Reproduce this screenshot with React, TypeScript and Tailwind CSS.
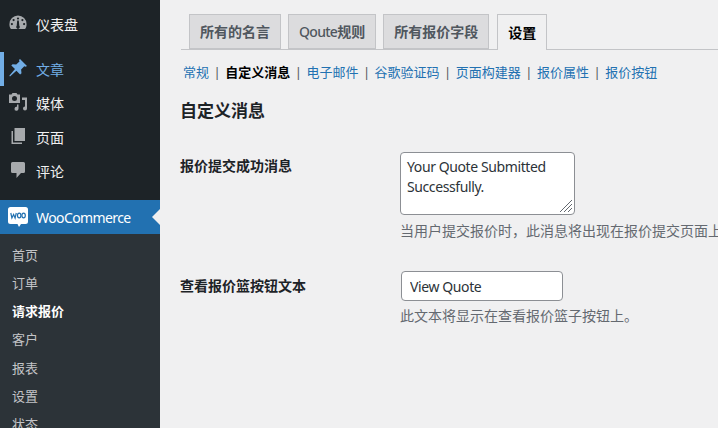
const font = { fontFamily: '"Noto Sans","Noto Sans CJK SC",sans-serif' };

function Gauge() {
  return (
    <svg viewBox="0 0 20 20" className="w-5 h-5" fill="#a7aaad">
      <path fillRule="evenodd" d="M10 2.600a8.600 8.600 0 0 0-8.600 8.600c0 1.900.6 3.500 1.500 4.900h14.200c.9-1.400 1.500-3 1.500-4.900A8.600 8.600 0 0 0 10 2.600zM10 4.400a1.100 1.100 0 1 1 0 2.200 1.100 1.100 0 0 1 0-2.200zM5.600 6a1.100 1.100 0 1 1 0 2.200A1.100 1.100 0 0 1 5.600 6zm8.800 0a1.100 1.100 0 1 1 0 2.200 1.100 1.100 0 0 1 0-2.200zM3.900 10a1.100 1.100 0 1 1 0 2.200 1.100 1.100 0 0 1 0-2.200zm12.200 0a1.100 1.100 0 1 1 0 2.200 1.100 1.100 0 0 1 0-2.200zM10.800 7.400l.5 5.400a1.800 1.800 0 1 1-2.600 0l.5-5.400z" />
    </svg>
  );
}
function Pin() {
  return (
    <svg viewBox="0 0 20 20" className="w-5 h-5" fill="#72aee6">
      <path d="M12 1l7 7-1.400.8-1.300-.5-3.200 3.300.4 3.600-1.400 1.300-3.700-3.700L2 18.500l-.7-.7 5.700-6.700L3.300 7.600l1.300-1.400 3.600.4 3.300-3.200-.5-1.300z" />
    </svg>
  );
}
function Media() {
  return (
    <svg viewBox="0 0 20 20" className="w-5 h-5" fill="#a7aaad">
      <path fillRule="evenodd" d="M1 2.500h2.500l1-1.500h4l1 1.500H12v8.500H1zM6.500 4a2.500 2.500 0 1 0 0 5 2.500 2.500 0 0 0 0-5z" />
      <path d="M14 5.500h5V16.500a2 2 0 1 1-2-2V8h-3z" />
      <path d="M10.500 12.500v4.300a2 2 0 1 1-1.500-2v-2.300z" />
    </svg>
  );
}
function Page() {
  return (
    <svg viewBox="0 0 20 20" className="w-5 h-5" fill="#a7aaad">
      <path d="M6.500 2H17v13H6.500z" />
      <path d="M3.500 5H5v11.500h9V18H3.500z" />
    </svg>
  );
}
function Comment() {
  return (
    <svg viewBox="0 0 20 20" className="w-5 h-5" fill="#a7aaad">
      <path d="M4.500 2h11A1.500 1.500 0 0 1 17 3.500v8a1.500 1.500 0 0 1-1.500 1.500H13l-4.500 5v-5h-4A1.500 1.500 0 0 1 3 11.500v-8A1.500 1.500 0 0 1 4.500 2z" />
    </svg>
  );
}
function Woo() {
  return (
    <svg viewBox="0 0 20 20" className="w-5 h-5">
      <path fill="#fff" d="M2.500 0h15A2.500 2.500 0 0 1 20 2.500v12a2.500 2.500 0 0 1-2.500 2.500H13l-2 3-1.500-3h-7A2.500 2.500 0 0 1 0 14.500v-12A2.500 2.500 0 0 1 2.500 0z" />
      <path fill="none" stroke="#2271b1" strokeWidth="1.200" d="M2.800 6l1.100 5 1.700-3.600 1.500 3.600L8.300 6" />
      <ellipse cx="11.200" cy="8.500" rx="1.700" ry="2.300" fill="none" stroke="#2271b1" strokeWidth="1.200" />
      <ellipse cx="15.600" cy="8.500" rx="1.700" ry="2.300" fill="none" stroke="#2271b1" strokeWidth="1.200" />
    </svg>
  );
}

function MenuItem({ icon, label, active }: { icon: React.ReactNode; label: string; active?: boolean }) {
  return (
    <div className={`h-[34px] shrink-0 flex items-center pl-[4px] text-[14px] border-l-4 ${active ? 'border-[#72aee6] text-[#72aee6]' : 'border-transparent text-[#f0f0f1]'}`}>
      <span className="w-5 -mt-[3px] flex justify-center">{icon}</span>
      <span className="ml-[8px]">{label}</span>
    </div>
  );
}

const subs = ['首页', '订单', '请求报价', '客户', '报表', '设置', '状态'];
const links = ['电子邮件', '谷歌验证码', '页面构建器', '报价属性', '报价按钮'];
const tabs = ['所有的名言', '所有报价字段'];

export default function App() {
  return (
    <div style={font} className="w-[718px] h-[428px] overflow-hidden flex bg-[#f0f0f1] text-[#1d2327]">
      <aside className="w-[160px] shrink-0 bg-[#1d2327] flex flex-col overflow-hidden">
        <div className="shrink-0 pt-[7px] pb-[11px]">
          <MenuItem icon={<Gauge />} label="仪表盘" />
        </div>
        <MenuItem icon={<Pin />} label="文章" active />
        <MenuItem icon={<Media />} label="媒体" />
        <MenuItem icon={<Page />} label="页面" />
        <MenuItem icon={<Comment />} label="评论" />
        <div className="h-[12px] shrink-0" />
        <div className="relative shrink-0 h-[34px] bg-[#2271b1] text-white text-[14px] flex items-center pl-[8px]">
          <Woo />
          <span className="ml-[8px] tracking-[-0.6px]">WooCommerce</span>
          <span className="absolute right-0 top-[9px] border-y-[8px] border-y-transparent border-r-[8px] border-r-[#f0f0f1]" />
        </div>
        <div className="shrink-0 bg-[#2c3338] pt-[7.500px] pl-[12px] text-[13px] text-[#c3c4c7] grow">
          {subs.map((s) => (
            <div key={s} className={`h-[28.200px] flex items-center ${s === '请求报价' ? 'font-bold text-white' : ''}`}>{s}</div>
          ))}
        </div>
      </aside>

      <main className="flex-1 min-w-0 pl-[20px] pt-[14px] overflow-hidden">
        <div className="flex gap-[7px] ml-[1px] pl-[8px] border-b border-[#c3c4c7] h-[36px] text-[14px] font-semibold whitespace-nowrap">
          <div className="h-[35px] px-[10px] flex items-center bg-[#dcdcde] border border-[#c3c4c7] text-[#50575e]">{tabs[0]}</div>
          <div className="h-[35px] px-[10px] flex items-center bg-[#dcdcde] border border-[#c3c4c7] text-[#50575e]"><span className="tracking-[-0.7px] font-medium">Qoute</span>规则</div>
          <div className="h-[35px] px-[10px] flex items-center bg-[#dcdcde] border border-[#c3c4c7] text-[#50575e]">{tabs[1]}</div>
          <div className="h-[36px] ml-[1px] px-[10px] flex items-center bg-[#f0f0f1] border border-b-0 border-[#c3c4c7] text-black">设置</div>
        </div>

        <div className="mt-[14px] pl-[3px] flex items-center text-[13px] h-[18px] whitespace-nowrap text-[#2271b1]">
          <span>常规</span>
          <span className="mx-[4.500px] text-[#50575e]">|</span>
          <span className="font-bold text-black">自定义消息</span>
          {links.map((l) => (
            <span key={l} className="flex items-center">
              <span className="mx-[4.500px] text-[#50575e]">|</span>
              <span>{l}</span>
            </span>
          ))}
        </div>

        <h2 className="mt-[17px] text-[17px] leading-[24px] font-bold text-[#1d2327]">自定义消息</h2>

        <div className="mt-[29px] flex">
          <div className="w-[220px] shrink-0 pt-[4px] text-[14px] leading-[20px] font-bold">报价提交成功消息</div>
          <div className="whitespace-nowrap">
            <div className="relative w-[175px] h-[63px]">
              <textarea readOnly defaultValue="Your Quote Submitted Successfully." className="block w-full h-full resize-none bg-white border border-[#8c8f94] rounded-[4px] px-[6px] py-[4px] text-[14px] leading-[20px] tracking-[-0.4px] text-[#2c3338] outline-none" />
              <svg viewBox="0 0 14 14" className="absolute right-[2px] bottom-[2px] w-[14px] h-[14px]" stroke="#646970" strokeWidth="1" fill="none">
                <path d="M1 13 13 1M5 13 13 5M9 13 13 9" />
              </svg>
            </div>
            <p className="mt-[6px] text-[14px] leading-[20px] text-[#646970]">当用户提交报价时，此消息将出现在报价提交页面上。</p>
          </div>
        </div>

        <div className="mt-[30px] flex">
          <div className="w-[220px] shrink-0 pt-[5px] text-[14px] leading-[20px] font-bold">查看报价篮按钮文本</div>
          <div>
            <input readOnly value="View Quote" className="block ml-[1px] w-[162px] h-[30px] bg-white border border-[#8c8f94] rounded-[4px] px-[8px] text-[14px] tracking-[-0.4px] text-[#2c3338] outline-none" />
            <p className="mt-[5px] text-[14px] leading-[20px] text-[#646970]">此文本将显示在查看报价篮子按钮上。</p>
          </div>
        </div>
      </main>
    </div>
  );
}
